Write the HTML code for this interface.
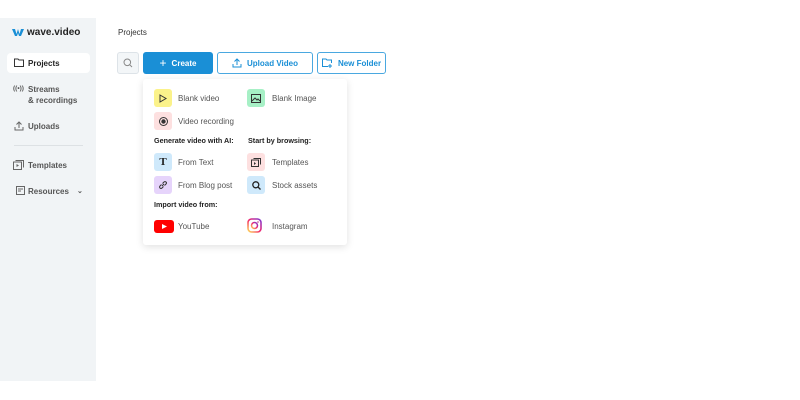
<!DOCTYPE html>
<html><head><style>
*{margin:0;padding:0;box-sizing:border-box}
body{width:800px;height:400px;background:#fff;font-family:"Liberation Sans",sans-serif;position:relative;overflow:hidden;color:#222}
.a{position:absolute}
.sb{left:0;top:18px;width:96px;height:363px;background:#f1f4f6}
.nav{font-size:8px;color:#555;font-weight:bold}
.btn{border-radius:3px;font-size:8px;font-weight:bold;display:flex;align-items:center;justify-content:center;gap:5px}
.ic{width:18px;height:18px;border-radius:3px;display:flex;align-items:center;justify-content:center}
.t{font-size:8px;color:#555}
.h{font-size:7.2px;font-weight:bold;color:#222}
</style></head><body>
<div class="a sb"></div>
<div class="a" style="left:12px;top:27px;font-size:10px;font-weight:bold;color:#222;display:flex;align-items:center;gap:3px">
<svg width="12" height="9" viewBox="0 0 12 9"><path d="M0 1h3l1.5 5L6 1h0l1.5 5L9 1h3L9 8H7L6 5 5 8H3z" fill="#1a8fd6"/></svg>wave.video</div>
<div class="a" style="left:7px;top:53px;width:83px;height:20px;background:#fff;border-radius:4px"></div>
<svg class="a" style="left:14px;top:58px" width="10" height="9" viewBox="0 0 10 9"><path d="M.5 1h3.5l1 1h4.5v6.5h-9z" fill="none" stroke="#333"/></svg>
<div class="a nav" style="left:28px;top:59px;color:#222">Projects</div>
<div class="a nav" style="left:13px;top:85px;font-size:6.5px">((•))</div>
<div class="a nav" style="left:28px;top:85px">Streams</div>
<div class="a nav" style="left:28px;top:96px">&amp; recordings</div>
<svg class="a" style="left:14px;top:121px" width="10" height="10" viewBox="0 0 10 10"><path d="M5 7V1M2.5 3.5L5 1l2.5 2.5M1 6v3h8V6" fill="none" stroke="#666"/></svg>
<div class="a nav" style="left:28px;top:122px">Uploads</div>
<div class="a" style="left:14px;top:145px;width:69px;height:1px;background:#dde1e4"></div>
<svg class="a" style="left:13px;top:160px" width="11" height="10" viewBox="0 0 11 10"><rect x=".5" y="2" width="8" height="7.5" fill="none" stroke="#666"/><path d="M2.5.5h8v7" fill="none" stroke="#666"/><path d="M3.5 4v3l2.5-1.5z" fill="#666"/></svg>
<div class="a nav" style="left:28px;top:161px">Templates</div>
<svg class="a" style="left:16px;top:186px" width="9" height="9" viewBox="0 0 9 9"><rect x=".5" y=".5" width="8" height="8" fill="none" stroke="#666"/><path d="M2 3h5M2 5h3" stroke="#666"/></svg>
<div class="a nav" style="left:28px;top:187px">Resources</div>
<div class="a nav" style="left:77px;top:187px;font-size:7px">⌄</div>

<div class="a" style="left:118px;top:28px;font-size:8px;color:#333">Projects</div>
<div class="a" style="left:117px;top:52px;width:22px;height:22px;border:1px solid #dde3e8;background:#f3f6f8;border-radius:3px"></div>
<svg class="a" style="left:123px;top:58px" width="10" height="10" viewBox="0 0 10 10"><circle cx="4.3" cy="4.3" r="3.3" fill="none" stroke="#888"/><path d="M6.8 6.8L9 9" stroke="#888"/></svg>
<div class="a btn" style="left:143px;top:52px;width:70px;height:22px;background:#1a8fd6;color:#fff"><span style="font-size:12px;font-weight:normal">+</span>Create</div>
<div class="a btn" style="left:217px;top:52px;width:96px;height:22px;border:1.5px solid #4aa8e0;color:#1a8fd6"><svg width="10" height="10" viewBox="0 0 10 10"><path d="M5 7V1M2.5 3.5L5 1l2.5 2.5M1 6v3h8V6" fill="none" stroke="#1a8fd6"/></svg>Upload Video</div>
<div class="a btn" style="left:317px;top:52px;width:69px;height:22px;border:1.5px solid #4aa8e0;color:#1a8fd6"><svg width="11" height="10" viewBox="0 0 11 10"><path d="M6 8.5H.5V1h3.5l1 1h4.5v3M8 6v4M6 8h4" fill="none" stroke="#1a8fd6"/></svg>New Folder</div>

<div class="a" style="left:143px;top:79px;width:204px;height:166px;background:#fff;border-radius:3px;box-shadow:0 2px 8px rgba(0,0,0,.12)"></div>
<div class="a ic" style="left:154px;top:89px;background:#fbf28a"><svg width="8" height="9"><path d="M1 1l6 3.5-6 3.5z" fill="none" stroke="#333"/></svg></div>
<div class="a t" style="left:178px;top:94px">Blank video</div>
<div class="a ic" style="left:247px;top:89px;background:#a7f0c6"><svg width="10" height="9"><rect x=".5" y=".5" width="9" height="8" fill="none" stroke="#333"/><path d="M1 7l3-3 2 2 1-1 2 2" fill="none" stroke="#333"/></svg></div>
<div class="a t" style="left:272px;top:94px">Blank Image</div>
<div class="a ic" style="left:154px;top:112px;background:#fde0e0"><svg width="9" height="9"><circle cx="4.5" cy="4.5" r="4" fill="none" stroke="#333"/><circle cx="4.5" cy="4.5" r="2.2" fill="#333"/></svg></div>
<div class="a t" style="left:178px;top:117px">Video recording</div>
<div class="a h" style="left:154px;top:136px">Generate video with AI:</div>
<div class="a h" style="left:248px;top:136px">Start by browsing:</div>
<div class="a ic" style="left:154px;top:153px;background:#cfe9fb;font-family:'Liberation Serif',serif;font-weight:bold;font-size:11px">T</div>
<div class="a t" style="left:178px;top:158px">From Text</div>
<div class="a ic" style="left:247px;top:153px;background:#fde0e0"><svg width="10" height="9"><rect x=".5" y="2" width="7" height="6.5" fill="none" stroke="#333"/><path d="M2.5.5h7v6" fill="none" stroke="#333"/><path d="M3 4v3l2-1.5z" fill="#333"/></svg></div>
<div class="a t" style="left:272px;top:158px">Templates</div>
<div class="a ic" style="left:154px;top:176px;background:#e6d4fb"><svg width="10" height="10" viewBox="0 0 10 10"><path d="M4 6L6 4M3.5 4.5L2 6a1.4 1.4 0 002 2l1.5-1.5M4.5 3.5L6 2a1.4 1.4 0 012 2L6.5 5.5" fill="none" stroke="#333"/></svg></div>
<div class="a t" style="left:178px;top:181px">From Blog post</div>
<div class="a ic" style="left:247px;top:176px;background:#cfe9fb"><svg width="9" height="9"><circle cx="3.8" cy="3.8" r="3" fill="none" stroke="#222" stroke-width="1.3"/><path d="M6 6l2.5 2.5" stroke="#222" stroke-width="1.3"/></svg></div>
<div class="a t" style="left:272px;top:181px">Stock assets</div>
<div class="a h" style="left:154px;top:200px">Import video from:</div>
<div class="a" style="left:154px;top:220px;width:20px;height:13px;background:#f00;border-radius:3px"><svg width="20" height="13"><path d="M8 4l5 2.5-5 2.5z" fill="#fff"/></svg></div>
<div class="a t" style="left:178px;top:222px">YouTube</div>
<svg class="a" style="left:247px;top:218px" width="15" height="15" viewBox="0 0 15 15"><defs><linearGradient id="g" x1="0" y1="1" x2="1" y2="0"><stop offset="0" stop-color="#fd5"/><stop offset=".5" stop-color="#f2266e"/><stop offset="1" stop-color="#7a3ad6"/></linearGradient></defs><rect x="1" y="1" width="13" height="13" rx="3.5" fill="none" stroke="url(#g)" stroke-width="1.6"/><circle cx="7.5" cy="7.5" r="3" fill="none" stroke="url(#g)" stroke-width="1.5"/><circle cx="11" cy="4" r=".8" fill="#c13584"/></svg>
<div class="a t" style="left:272px;top:222px">Instagram</div>
</body></html>
